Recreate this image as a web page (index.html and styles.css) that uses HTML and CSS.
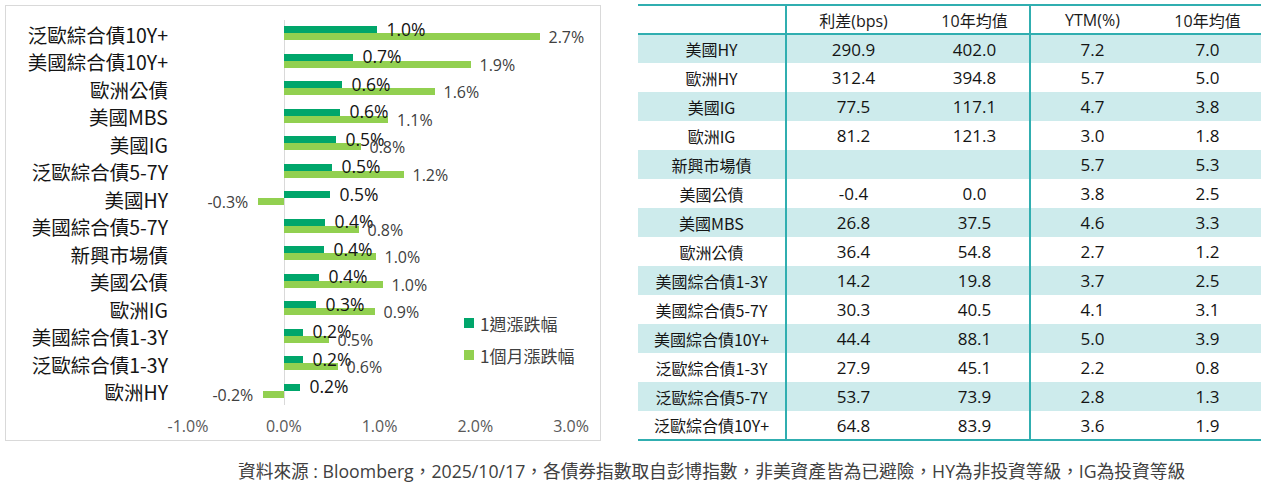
FILE: index.html
```html
<!DOCTYPE html>
<html lang="zh-Hant">
<head>
<meta charset="utf-8">
<title>債券指數漲跌幅與利差</title>
<link rel="stylesheet" href="styles.css">
</head>
<body>
<div class="page">
  <div class="top">
    <div class="chart">
      <div class="plotwrap">
        <div class="cats">
          <div class="cat">泛歐綜合債10Y+</div>
          <div class="cat">美國綜合債10Y+</div>
          <div class="cat">歐洲公債</div>
          <div class="cat">美國MBS</div>
          <div class="cat">美國IG</div>
          <div class="cat">泛歐綜合債5-7Y</div>
          <div class="cat">美國HY</div>
          <div class="cat">美國綜合債5-7Y</div>
          <div class="cat">新興市場債</div>
          <div class="cat">美國公債</div>
          <div class="cat">歐洲IG</div>
          <div class="cat">美國綜合債1-3Y</div>
          <div class="cat">泛歐綜合債1-3Y</div>
          <div class="cat">歐洲HY</div>
        </div>
        <div class="plot">
          <div class="row">
            <div class="bl"><div class="bar wk" style="width:92.5px"></div><span class="lab wkl">1.0%</span></div>
            <div class="bl"><div class="bar mo" style="width:255.5px"></div><span class="lab mol">2.7%</span></div>
          </div>
          <div class="row">
            <div class="bl"><div class="bar wk" style="width:68.5px"></div><span class="lab wkl">0.7%</span></div>
            <div class="bl"><div class="bar mo" style="width:186.5px"></div><span class="lab mol">1.9%</span></div>
          </div>
          <div class="row">
            <div class="bl"><div class="bar wk" style="width:57.5px"></div><span class="lab wkl">0.6%</span></div>
            <div class="bl"><div class="bar mo" style="width:150.5px"></div><span class="lab mol">1.6%</span></div>
          </div>
          <div class="row">
            <div class="bl"><div class="bar wk" style="width:55.5px"></div><span class="lab wkl">0.6%</span></div>
            <div class="bl"><div class="bar mo" style="width:104px"></div><span class="lab mol">1.1%</span></div>
          </div>
          <div class="row">
            <div class="bl"><div class="bar wk" style="width:51.5px"></div><span class="lab wkl">0.5%</span></div>
            <div class="bl"><div class="bar mo" style="width:76.5px"></div><span class="lab mol">0.8%</span></div>
          </div>
          <div class="row">
            <div class="bl"><div class="bar wk" style="width:47.5px"></div><span class="lab wkl">0.5%</span></div>
            <div class="bl"><div class="bar mo" style="width:119.5px"></div><span class="lab mol">1.2%</span></div>
          </div>
          <div class="row">
            <div class="bl"><div class="bar wk" style="width:45.5px"></div><span class="lab wkl">0.5%</span></div>
            <div class="bl neg"><span class="lab mol">-0.3%</span><div class="bar mo" style="width:25.5px"></div></div>
          </div>
          <div class="row">
            <div class="bl"><div class="bar wk" style="width:40.5px"></div><span class="lab wkl">0.4%</span></div>
            <div class="bl"><div class="bar mo" style="width:74.5px"></div><span class="lab mol">0.8%</span></div>
          </div>
          <div class="row">
            <div class="bl"><div class="bar wk" style="width:39.5px"></div><span class="lab wkl">0.4%</span></div>
            <div class="bl"><div class="bar mo" style="width:91.5px"></div><span class="lab mol">1.0%</span></div>
          </div>
          <div class="row">
            <div class="bl"><div class="bar wk" style="width:34.5px"></div><span class="lab wkl">0.4%</span></div>
            <div class="bl"><div class="bar mo" style="width:98.5px"></div><span class="lab mol">1.0%</span></div>
          </div>
          <div class="row">
            <div class="bl"><div class="bar wk" style="width:31.5px"></div><span class="lab wkl">0.3%</span></div>
            <div class="bl"><div class="bar mo" style="width:90.5px"></div><span class="lab mol">0.9%</span></div>
          </div>
          <div class="row">
            <div class="bl"><div class="bar wk" style="width:18.5px"></div><span class="lab wkl">0.2%</span></div>
            <div class="bl"><div class="bar mo" style="width:44.5px"></div><span class="lab mol">0.5%</span></div>
          </div>
          <div class="row">
            <div class="bl"><div class="bar wk" style="width:18.5px"></div><span class="lab wkl">0.2%</span></div>
            <div class="bl"><div class="bar mo" style="width:53.5px"></div><span class="lab mol">0.6%</span></div>
          </div>
          <div class="row">
            <div class="bl"><div class="bar wk" style="width:15.5px"></div><span class="lab wkl">0.2%</span></div>
            <div class="bl neg"><span class="lab mol">-0.2%</span><div class="bar mo" style="width:20.5px"></div></div>
          </div>
        </div>
      </div>
      <div class="axis">
        <span class="tick">-1.0%</span>
        <span class="tick">0.0%</span>
        <span class="tick">1.0%</span>
        <span class="tick">2.0%</span>
        <span class="tick">3.0%</span>
      </div>
      <div class="legend">
        <div class="lg"><span class="sw wk"></span>1週漲跌幅</div>
        <div class="lg"><span class="sw mo"></span>1個月漲跌幅</div>
      </div>
    </div>

    <table class="tbl">
      <colgroup>
        <col class="c1"><col class="c2"><col class="c3"><col class="c4"><col class="c5">
      </colgroup>
      <thead>
        <tr><th class="name sep"></th><th>利差(bps)</th><th class="sep">10年均值</th><th>YTM(%)</th><th>10年均值</th></tr>
      </thead>
      <tbody>
        <tr class="band"><td class="name sep">美國HY</td><td>290.9</td><td class="sep">402.0</td><td>7.2</td><td>7.0</td></tr>
        <tr><td class="name sep">歐洲HY</td><td>312.4</td><td class="sep">394.8</td><td>5.7</td><td>5.0</td></tr>
        <tr class="band"><td class="name sep">美國IG</td><td>77.5</td><td class="sep">117.1</td><td>4.7</td><td>3.8</td></tr>
        <tr><td class="name sep">歐洲IG</td><td>81.2</td><td class="sep">121.3</td><td>3.0</td><td>1.8</td></tr>
        <tr class="band"><td class="name sep">新興市場債</td><td></td><td class="sep"></td><td>5.7</td><td>5.3</td></tr>
        <tr><td class="name sep">美國公債</td><td>-0.4</td><td class="sep">0.0</td><td>3.8</td><td>2.5</td></tr>
        <tr class="band"><td class="name sep">美國MBS</td><td>26.8</td><td class="sep">37.5</td><td>4.6</td><td>3.3</td></tr>
        <tr><td class="name sep">歐洲公債</td><td>36.4</td><td class="sep">54.8</td><td>2.7</td><td>1.2</td></tr>
        <tr class="band"><td class="name sep">美國綜合債1-3Y</td><td>14.2</td><td class="sep">19.8</td><td>3.7</td><td>2.5</td></tr>
        <tr><td class="name sep">美國綜合債5-7Y</td><td>30.3</td><td class="sep">40.5</td><td>4.1</td><td>3.1</td></tr>
        <tr class="band"><td class="name sep">美國綜合債10Y+</td><td>44.4</td><td class="sep">88.1</td><td>5.0</td><td>3.9</td></tr>
        <tr><td class="name sep">泛歐綜合債1-3Y</td><td>27.9</td><td class="sep">45.1</td><td>2.2</td><td>0.8</td></tr>
        <tr class="band"><td class="name sep">泛歐綜合債5-7Y</td><td>53.7</td><td class="sep">73.9</td><td>2.8</td><td>1.3</td></tr>
        <tr class="last"><td class="name sep">泛歐綜合債10Y+</td><td>64.8</td><td class="sep">83.9</td><td>3.6</td><td>1.9</td></tr>
      </tbody>
    </table>
  </div>
  <div class="note">資料來源 : Bloomberg，2025/10/17，各債券指數取自彭博指數，非美資產皆為已避險，HY為非投資等級，IG為投資等級</div>
</div>
</body>
</html>
```

FILE: styles.css
```css
* { box-sizing: border-box; }
html, body { margin: 0; padding: 0; background: #ffffff; }
body {
  width: 1267px;
  height: 484px;
  overflow: hidden;
  font-family: "Open Sans", "Noto Sans CJK TC", sans-serif;
  color: #222222;
}
.page { display: flex; flex-direction: column; }
.top {
  display: flex;
  align-items: flex-start;
  padding: 4px 0 0 5px;
  gap: 37px;
}

/* ---------- chart ---------- */
.chart {
  position: relative;
  width: 596px;
  height: 436px;
  margin-top: 1px;
  border: 1px solid #d9d9d9;
  padding-top: 13.5px;
}
.plotwrap { display: flex; gap: 20px; }
.cats { width: 162px; display: flex; flex-direction: column; }
.cat {
  height: 27.5px;
  line-height: 27.5px;
  text-align: right;
  white-space: nowrap;
  font-family: "Noto Sans CJK TC", sans-serif;
  font-size: 19.5px;
  color: #141414;
  padding-top: 1px;
}
.plot {
  width: 383px;
  display: flex;
  flex-direction: column;
  background: linear-gradient(#d9d9d9, #d9d9d9) no-repeat 95.5px 0 / 1px 100%;
}
.row {
  height: 27.5px;
  padding-top: 6.75px;
  display: flex;
  flex-direction: column;
}
.bl {
  height: 7px;
  display: flex;
  align-items: center;
  padding-left: 96px;
}
.bl.neg {
  width: 95.75px;
  padding-left: 0;
  justify-content: flex-end;
}
.bar { height: 7px; flex: none; }
.wk { background: #00a66b; }
.mo { background: #92d050; }
.lab {
  position: relative;
  z-index: 1;
  line-height: 7px;
  white-space: nowrap;
  flex: none;
}
.wkl {
  margin-left: 10px;
  font-size: 17.5px;
  font-weight: 500;
  color: #141414;
  top: -0.5px;
}
.mol {
  margin-left: 9px;
  font-size: 16px;
  font-weight: 400;
  color: #404040;
  top: 1px;
}
.neg .mol { margin-left: 0; margin-right: 10px; }

.axis {
  display: flex;
  justify-content: space-between;
  width: 443px;
  margin-left: 152px;
  margin-top: 10.5px;
  line-height: 22px;
}
.tick {
  width: 60px;
  text-align: center;
  font-size: 16px;
  font-weight: 400;
  color: #595959;
}
.legend {
  position: absolute;
  left: 458px;
  top: 301px;
  display: flex;
  flex-direction: column;
}
.lg {
  display: flex;
  align-items: center;
  height: 32px;
  font-family: "Noto Sans CJK TC", sans-serif;
  font-size: 17px;
  font-weight: 400;
  color: #404040;
}
.sw { width: 10px; height: 10px; margin-right: 6px; flex: none; }

/* ---------- table ---------- */
.tbl {
  width: 623px;
  table-layout: fixed;
  border-collapse: collapse;
  border-top: 2px solid #30aeb0;
  border-bottom: 2px solid #30aeb0;
}
.c1 { width: 148px; }
.c2 { width: 134px; }
.c3 { width: 110px; }
.c4 { width: 124px; }
.c5 { width: 107px; }
.tbl th, .tbl td {
  height: 29px;
  padding: 0;
  text-align: center;
  vertical-align: middle;
  white-space: nowrap;
}
.tbl th {
  font-weight: 400;
  font-size: 16px;
  color: #1a1a1a;
  border-bottom: 2px solid #30aeb0;
}
.tbl td {
  font-size: 17px;
  color: #141414;
}
.tbl td.name {
  font-family: "Noto Sans CJK TC", sans-serif;
  font-size: 16px;
  color: #141414;
}
.tbl .sep { border-right: 2px solid #30aeb0; }
.tbl tr.band td { background: #cdebec; }

/* ---------- note ---------- */
.note {
  margin-top: 18px;
  padding-left: 238px;
  line-height: 24px;
  font-size: 17.7px;
  font-weight: 400;
  color: #404040;
  white-space: nowrap;
}
```
